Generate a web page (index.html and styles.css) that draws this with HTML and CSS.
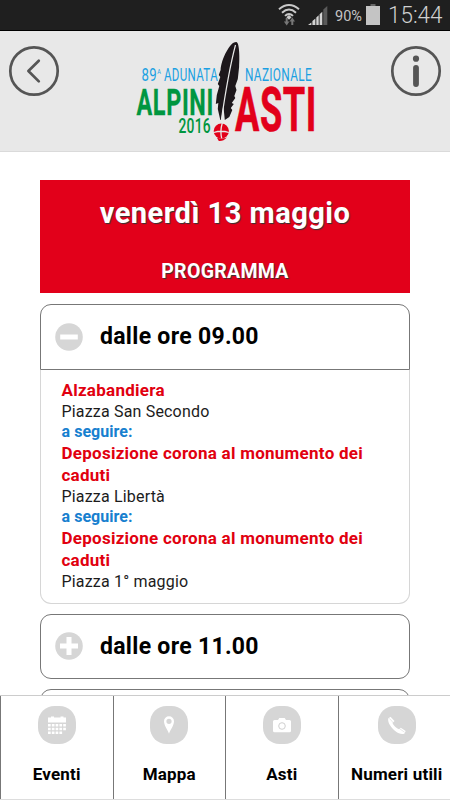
FILE: index.html
```html
<!DOCTYPE html>
<html lang="it">
<head>
<meta charset="utf-8">
<meta name="viewport" content="width=device-width, initial-scale=1">
<title>Adunata Alpini Asti 2016</title>
<link rel="stylesheet" href="styles.css">
</head>
<body>
<div class="app">
  <div class="status">
    <svg class="status-icons" width="180" height="30" viewBox="270 0 180 30">
      <g fill="none" stroke="#c9c9c9" stroke-width="2">
        <path d="M279 9.200Q289 0.800 299 9.200"/>
        <path d="M282 12.700Q289 6.400 296 12.700"/>
        <path d="M285 15.900Q289 12 293 15.900"/>
      </g>
      <path d="M286.400 17.300L289 15L291.600 17.300L289 19.800Z" fill="#c9c9c9"/>
      <path d="M285.700 18h2v3.500h1.700l-2.700 4l-2.800-4h1.800ZM291.300 25v-3.500h-1.800l2.800-4l2.700 4h-1.700v3.500Z" fill="#777"/>
      <path d="M308 25l3.400-2.600V25ZM312.400 25v-4l3-2.500V25ZM316.300 25v-7.500l2.400-2.200V25ZM319.600 25V14.300l2.700-2.500V25Z" fill="#d4d4d4"/>
      <path d="M323.300 25V9.500l4-3.500V25Z" fill="#5a5a5a"/>
      <path d="M370.500 4h5v3h-5Z" fill="#666"/>
      <rect x="366" y="6" width="14" height="19" fill="#c4c4c4"/>
      <text x="335" y="21" font-size="15.500" textLength="27" lengthAdjust="spacingAndGlyphs">90%</text>
      <text class="clock" x="388" y="23" font-size="24.500" textLength="54.500" lengthAdjust="spacingAndGlyphs">15:44</text>
    </svg>
  </div>

  <header class="header">
    <svg class="round" width="52" height="52" viewBox="0 0 52 52">
      <circle cx="26" cy="26" r="23.700"/>
      <path d="M30.800 15.800L20.400 26L30.800 36.400"/>
    </svg>
    <svg class="logo" width="200" height="113" viewBox="130 35 200 113">
      <g class="thin">
        <text x="141.500" y="81" font-size="18" textLength="15.500" lengthAdjust="spacingAndGlyphs">89</text>
        <text x="157.300" y="74" font-size="7.500" textLength="4" lengthAdjust="spacingAndGlyphs">A</text>
        <text x="164" y="81" font-size="18" textLength="54" lengthAdjust="spacingAndGlyphs">ADUNATA</text>
        <text x="245" y="81" font-size="18" textLength="67" lengthAdjust="spacingAndGlyphs">NAZIONALE</text>
      </g>
      <text class="alpini" x="136.500" y="115" font-size="36.500" textLength="77.500" lengthAdjust="spacingAndGlyphs">ALPINI</text>
      <text class="year" x="178.500" y="132.700" font-size="20.800" textLength="32.500" lengthAdjust="spacingAndGlyphs">2016</text>
      <text class="asti" x="235" y="131.300" font-size="61" textLength="82" lengthAdjust="spacingAndGlyphs">ASTI</text>
      <g transform="translate(-0.700 0)">
        <path d="M237 42C233 42 230.500 46 227.500 51C223.500 58 221.500 65 221.300 70L219.500 75L221 77L218.500 84L220 86L217.500 95L216.500 104L219 103L218.500 109L221 120L222 120L224 105L225.500 120L230 117L233 110L231.500 108L234.500 104L232.500 103L236 98L235 96L237.200 90L236 86L238.500 79L239.800 67C240.500 57 240 42 237 42Z" fill="#1d171b"/>
        <path d="M236.200 45Q229 72 221.800 122" fill="none" stroke="#e8e8e8" stroke-width="1.200"/>
        <circle cx="222" cy="131" r="7.600" fill="#e2001a"/>
        <path d="M214.500 132.500Q222 130 229.500 132.500M223 123Q220.500 131 222.500 139" fill="none" stroke="#e8e8e8" stroke-width="1.300"/>
        <path d="M217.500 137.500Q222 139.500 227.500 137.500Q224 141.500 219.500 141Z" fill="#e2001a"/>
      </g>
    </svg>
    <svg class="round" width="52" height="52" viewBox="0 0 52 52">
      <circle cx="26" cy="26" r="23.700"/>
      <circle class="dot" cx="26" cy="13.700" r="3.100"/>
      <path class="stem" d="M26 22.800V39"/>
    </svg>
  </header>

  <main class="content">
    <section class="banner">
      <h1>venerdì 13 maggio</h1>
      <h2>PROGRAMMA</h2>
    </section>

    <section class="slot">
      <div class="slot-head open">
        <svg width="28" height="28" viewBox="0 0 28 28"><circle cx="14" cy="14" r="13.800"/><path d="M5.200 11.500h17.600v5H5.200Z"/></svg>
        <h3>dalle ore 09.00</h3>
      </div>
      <div class="slot-body">
        <p class="event">Alzabandiera</p>
        <p class="place">Piazza San Secondo</p>
        <p class="next">a seguire:</p>
        <p class="event">Deposizione corona al monumento dei caduti</p>
        <p class="place">Piazza Libertà</p>
        <p class="next">a seguire:</p>
        <p class="event">Deposizione corona al monumento dei caduti</p>
        <p class="place">Piazza 1° maggio</p>
      </div>
    </section>

    <section class="slot">
      <div class="slot-head">
        <svg width="28" height="28" viewBox="0 0 28 28"><circle cx="14" cy="14" r="13.800"/><path d="M11.500 5h5v6.500H23v5h-6.500V23h-5v-6.500H5v-5h6.500Z"/></svg>
        <h3>dalle ore 11.00</h3>
      </div>
    </section>

    <section class="slot">
      <div class="slot-head"></div>
    </section>
  </main>

  <nav class="tabs">
    <a class="tab">
      <svg width="38" height="38" viewBox="0 0 38 38">
        <rect width="38" height="38" rx="16.500"/>
        <path class="glyph" d="M10 11.500h3v-1h3v1h6.500v-1h3v1h2.500v5H10ZM10 18h2.700v2.500H10ZM13.800 18h2.700v2.500h-2.700ZM17.600 18h2.700v2.500h-2.700ZM21.400 18h2.700v2.500h-2.700ZM25.200 18h2.700v2.500h-2.700ZM10 21.700h2.700v2.500H10ZM13.800 21.700h2.700v2.500h-2.700ZM17.600 21.700h2.700v2.500h-2.700ZM21.400 21.700h2.700v2.500h-2.700ZM25.200 21.700h2.700v2.500h-2.700ZM10 25.400h2.700v2.600H10ZM13.800 25.400h2.700v2.600h-2.700ZM17.600 25.400h2.700v2.600h-2.700ZM21.400 25.400h2.700v2.600h-2.700Z"/>
      </svg>
      <span>Eventi</span>
    </a>
    <a class="tab">
      <svg width="38" height="38" viewBox="0 0 38 38">
        <rect width="38" height="38" rx="16.500"/>
        <path class="glyph" fill-rule="evenodd" d="M19 27.700C17.500 23.500 14 19.500 14 15.300A5 5 0 0 1 24 15.300C24 19.500 20.500 23.500 19 27.700ZM19 12.700A2.600 2.600 0 1 0 19 17.900A2.600 2.600 0 1 0 19 12.700Z"/>
      </svg>
      <span>Mappa</span>
    </a>
    <a class="tab">
      <svg width="38" height="38" viewBox="0 0 38 38">
        <rect width="38" height="38" rx="16.500"/>
        <path class="glyph" d="M11.500 14H15L16.300 12H21.700L23 14H26.500Q28 14 28 15.500V24.800Q28 26.300 26.500 26.300H11.500Q10 26.300 10 24.800V15.500Q10 14 11.500 14Z"/>
        <circle class="lens" cx="19" cy="20" r="3.300"/>
      </svg>
      <span>Asti</span>
    </a>
    <a class="tab wide">
      <svg width="38" height="38" viewBox="0 0 38 38">
        <rect width="38" height="38" rx="16.500"/>
        <path class="glyph" d="M10.200 12.500L12.500 10.700L16.500 15L14.500 17C15.500 19.500 18.500 22.300 21 23.200L22.800 21.800L27.700 25L26.500 27.500C24 28.800 20.500 27.500 17.500 25.200C13.500 22 9.500 17 10.200 12.500Z"/>
        <path class="cut" d="M11.500 12.500L15.500 17M21.300 22.500L26.500 26.200"/>
      </svg>
      <span>Numeri utili</span>
    </a>
  </nav>
</div>
</body>
</html>
```
FILE: styles.css
```css
* { box-sizing: border-box; }

body {
  margin: 0;
  background: #fff;
  font-family: Roboto, "Liberation Sans", sans-serif;
  color: #000;
}

h1, h2, h3, p { margin: 0; }

.app {
  width: 450px;
  height: 800px;
  display: flex;
  flex-direction: column;
  overflow: hidden;
}

.status {
  flex: none;
  height: 31px;
  background: #1f1f1f;
  border-bottom: 1px solid #000;
  display: flex;
  justify-content: flex-end;
}

.status-icons text { fill: #c4c4c4; }
.status-icons .clock { font-weight: 300; fill: #d0d0d0; }

.header {
  flex: none;
  height: 121px;
  background: #e8e8e8;
  border-bottom: 1px solid #dadada;
  padding: 4px 8px 0;
  display: flex;
}

.logo { margin: 0 60px 0 70px; flex: none; overflow: visible; }
.logo .thin { fill: #1ba0e2; letter-spacing: 0.500px; }
.logo .alpini {
  font-weight: 700;
  fill: #009640;
  stroke: #009640;
  stroke-width: 0.300;
  letter-spacing: 1px;
}
.logo .year { font-weight: 500; fill: #009640; letter-spacing: 0.400px; }
.logo .asti {
  font-weight: 700;
  fill: #e2001a;
  stroke: #e2001a;
  stroke-width: 0.600;
  letter-spacing: 1px;
}

.round { margin-top: 10px; flex: none; }
.round circle, .round path {
  fill: none;
  stroke: #555;
  stroke-width: 2.700;
  stroke-linecap: round;
  stroke-linejoin: round;
}
.round .dot { fill: #555; stroke: none; }
.round .stem { stroke-width: 5.800; }

.content {
  flex: 1;
  min-height: 0;
  overflow: hidden;
  padding: 28px 40px 0;
}

.banner {
  height: 113px;
  background: #e2001a;
  color: #fff;
  text-align: center;
  text-shadow: 1px 1px 1px #333;
  display: flex;
  flex-direction: column;
  align-items: center;
  padding-top: 15px;
}

.banner h1 {
  font-size: 29px;
  line-height: 36px;
  font-weight: 700;
  letter-spacing: 0.500px;
}

.banner h2 {
  margin-top: 28px;
  font-size: 19.500px;
  line-height: 26px;
  font-weight: 700;
  letter-spacing: 0.300px;
}

.slot { margin-top: 11px; }
.slot + .slot { margin-top: 10px; }

.slot-head {
  height: 65px;
  border: 1px solid #777;
  border-radius: 11px;
  display: flex;
  align-items: center;
  gap: 17px;
  padding: 0 14px;
}

.slot-head svg { margin-top: -1px; }

.slot-head.open {
  height: 66px;
  border-radius: 11px 11px 0 0;
}

.slot-head circle { fill: #d6d6d6; }
.slot-head path { fill: #fff; }

.slot-head h3 {
  font-size: 23px;
  line-height: 30px;
  font-weight: 700;
  letter-spacing: 0.300px;
}

.slot-body {
  height: 234px;
  border: 1px solid #d6d6d6;
  border-top: 0;
  border-radius: 0 0 11px 11px;
  padding: 9px 20px 0 20.500px;
}

.event {
  color: #e1000f;
  font-weight: 700;
  font-size: 17px;
  line-height: 22.500px;
  letter-spacing: 0.260px;
}

.place {
  font-size: 16px;
  line-height: 20px;
  font-weight: 400;
  letter-spacing: 0.180px;
  color: #1c1c1c;
}

.next {
  color: #1780cf;
  font-weight: 700;
  font-size: 16px;
  line-height: 20px;
  letter-spacing: 0.050px;
}

.tabs {
  flex: none;
  height: 105px;
  background: #fff;
  border-top: 1px solid #ccc;
  border-bottom: 1px solid #ddd;
  display: grid;
  grid-template-columns: repeat(4, 1fr);
}

.tab {
  border-left: 1px solid #777;
  display: flex;
  flex-direction: column;
  align-items: center;
  padding-top: 10px;
}

.tab.wide { padding-left: 5px; }
.tab rect { fill: #d6d6d6; }
.glyph { fill: #fff; }
.lens { fill: #fff; stroke: #d0d0d0; stroke-width: 1; }
.cut { fill: none; stroke: #d6d6d6; stroke-width: 0.600; }

.tab span {
  margin-top: 19px;
  font-size: 17px;
  line-height: 22px;
  font-weight: 700;
  letter-spacing: 0.200px;
  white-space: nowrap;
}
```
